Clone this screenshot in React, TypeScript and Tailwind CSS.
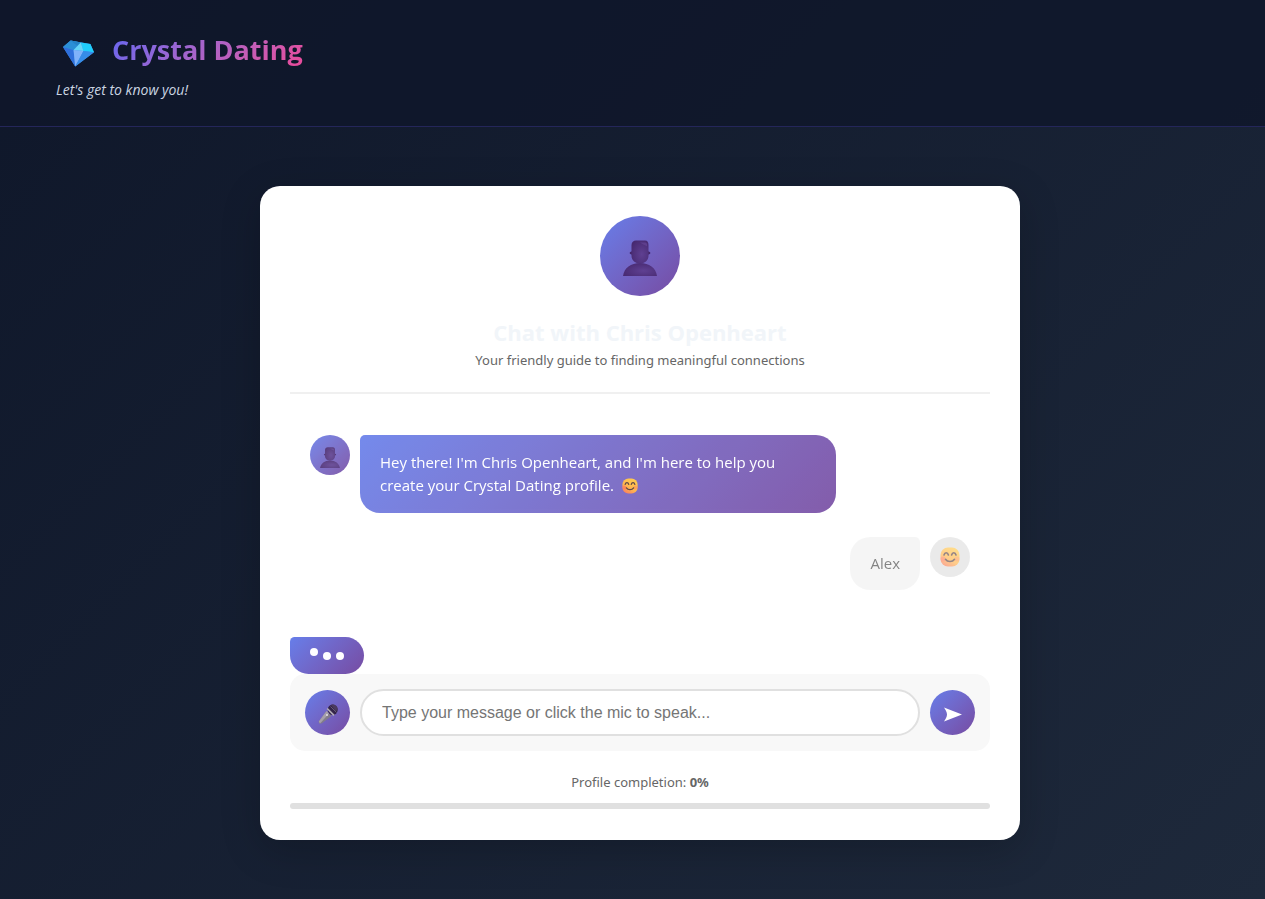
import { useId, useState } from "react";

const accent = "bg-linear-135 from-[#667eea] to-[#764ba2]";

function Gem() {
  return (
    <svg viewBox="64 58 100 87" className="h-[29px] w-[33px]" aria-hidden="true">
      <path d="M67 82 90 62 150 73 161 98 104 141Z" fill="#3d8fe8" />
      <path d="M67 82 90 62 121 68 101 92Z" fill="#2b8fd6" />
      <path d="M90 62 121 68 110 78Z" fill="#2484c8" />
      <path d="M121 68 150 73 161 98 129 94Z" fill="#20cdfb" />
      <path d="M121 68 129 94 99 91Z" fill="#67d5f7" />
      <path d="M67 82 99 91 104 141Z" fill="#2e6fdb" />
      <path d="M99 91 129 94 104 141Z" fill="#7fb2fa" />
      <path d="M129 94 161 98 104 141Z" fill="#368ce8" />
    </svg>
  );
}

function Silhouette({ className }: { className: string }) {
  const id = useId();
  return (
    <svg viewBox="0 0 34 36" className={className} aria-hidden="true">
      <defs>
        <radialGradient id={id} cx="0.6" cy="0.6" r="0.7">
          <stop offset="0" stopColor="#5f4092" />
          <stop offset="1" stopColor="#472970" />
        </radialGradient>
      </defs>
      <path d="M0 36C1 28 8 23 17 23s16 5 17 13Z" fill={`url(#${id})`} />
      <ellipse cx="17" cy="13" rx="10.5" ry="2.800" fill="#432569" />
      <path
        d="M8.500 5C8.500 2 10.500.5 13 .5h9C24.500.5 25.500 2.500 25.500 5v11c0 4.500-4 7.500-8.500 7.500S8.500 20.500 8.500 16Z"
        fill={`url(#${id})`}
      />
      <path d="M17 2.500h5c2 0 2.500 2 2 4-2-1.500-4-2-7-4Z" fill="#654594" opacity="0.7" />
    </svg>
  );
}

function Smile({ className }: { className: string }) {
  const id = useId();
  return (
    <svg viewBox="0 0 20 20" className={className} aria-hidden="true">
      <defs>
        <linearGradient id={id} x1="0.8" y1="0" x2="0.2" y2="1">
          <stop offset="0" stopColor="#ffc83d" />
          <stop offset="0.6" stopColor="#ffae3d" />
          <stop offset="1" stopColor="#f8704f" />
        </linearGradient>
      </defs>
      <rect x="0.5" y="0.500" width="19" height="19" rx="7.500" fill={`url(#${id})`} />
      <ellipse cx="3" cy="12" rx="2.500" ry="2.500" fill="#ff5d4d" opacity="0.5" />
      <ellipse cx="17" cy="12" rx="2.500" ry="2.500" fill="#ff7a4d" opacity="0.45" />
      <g fill="none" stroke="#4e3436" strokeWidth="1.600" strokeLinecap="round">
        <path d="M4 8c.8-3 3.600-3 4.400 0M11.600 8c.8-3 3.600-3 4.400 0M5.500 12.300c2 3 7 3 9 0" />
      </g>
    </svg>
  );
}

function Microphone() {
  return (
    <svg viewBox="0 0 20 20" className="mt-[2px] size-5" aria-hidden="true">
      <path d="M8.500 7 13.500 12 3.500 19.500 1 19.500.800 17.500Z" fill="#827c8a" />
      <path d="M8.500 7 11 9.500 2 19.500 .800 17.500Z" fill="#a6a0aa" />
      <ellipse cx="14.700" cy="5.700" rx="5" ry="5.200" fill="#33244a" />
      <path d="M13 1c3-1.500 7.500 1.500 6.500 5.500L17.500 7Z" fill="#4a3a5e" />
      <path d="M9.200 4.500 16 11.300" stroke="#b3adb8" strokeWidth="1.700" />
      <path d="M12.500 2.500 18.500 8.500" stroke="#75697f" strokeWidth=".8" />
      <circle cx="9" cy="11" r="1" fill="#e4e1e6" />
    </svg>
  );
}

function SendArrow() {
  return (
    <svg viewBox="0 0 18 15" className="mt-1 h-[15px] w-[18px]" aria-hidden="true">
      <path d="M0 .5 18 7.500 0 14.500C1.500 12 3 10 3 7.500S1.500 3 0 .5Z" fill="#fff" />
    </svg>
  );
}

export default function App() {
  const [message, setMessage] = useState("");
  return (
    <div className="min-h-screen overflow-x-hidden bg-linear-135 from-[#0f172a] to-[#1e293b] font-['Open_Sans','Noto_Sans',sans-serif]">
      <header className="border-b border-[#24265a] bg-[#0f172a]/80 px-14 pt-[30px] pb-6">
        <div className="flex h-10 items-center">
          <span className="flex w-14 pt-[6px] pl-[6px]">
            <Gem />
          </span>
          <h1 className="bg-linear-135 from-[#6366f1] to-[#ec4899] bg-clip-text text-[27px] leading-10 font-bold text-transparent">
            Crystal Dating
          </h1>
        </div>
        <p className="mt-2 text-[14px] leading-6 text-slate-300 italic">Let's get to know you!</p>
      </header>

      <main className="py-[59px] pl-[15px]">
        <section className="mx-auto max-w-[760px] rounded-[20px] bg-white px-[30px] pt-[30px] pb-[31px] shadow-[0_10px_40px_rgba(0,0,0,0.2)]">
          <div className="flex flex-col items-center border-b-2 border-[#f0f0f0] pb-5 text-center">
            <div className={`flex size-20 items-center justify-center rounded-full ${accent}`}>
              <Silhouette className="mt-1 h-9 w-[34px]" />
            </div>
            <h2 className="mt-5 text-[22px] leading-8 font-bold text-slate-100">
              Chat with Chris Openheart
            </h2>
            <p className="font-['Noto_Sans',sans-serif] text-[13px] leading-6 text-[#666666]">
              Your friendly guide to finding meaningful connections
            </p>
          </div>

          <div className="flex flex-col gap-6 px-5 pt-[41px] pb-[47px]">
            <div className="flex items-start gap-[10px] opacity-90">
              <div className={`flex size-10 shrink-0 items-center justify-center rounded-full ${accent}`}>
                <Silhouette className="mt-1 h-[21px] w-5" />
              </div>
              <div className={`max-w-[476px] rounded-[20px] rounded-tl-[5px] px-5 py-4 ${accent}`}>
                <p className="text-[15px] leading-[23px] font-medium text-white">
                  Hey there! I'm Chris Openheart, and I'm here to help you create your Crystal Dating
                  profile. <Smile className="ml-1 inline size-4 align-[-3px]" />
                </p>
              </div>
            </div>
            <div className="flex items-start justify-end gap-[10px] opacity-60">
              <p className="rounded-[20px] rounded-tr-[5px] bg-[#f0f0f0] px-5 py-[15px] text-[15px] leading-[23px] text-[#333333]">
                Alex
              </p>
              <div className="flex size-10 shrink-0 items-center justify-center rounded-full bg-[#dddddd]">
                <Smile className="size-5" />
              </div>
            </div>
          </div>

          <div
            className={`flex h-[37px] w-[74px] items-center justify-center gap-[5px] rounded-[20px] rounded-tl-[5px] ${accent}`}
            aria-label="Chris is typing"
          >
            <span className="mb-2 size-2 rounded-full bg-white" />
            <span className="size-2 rounded-full bg-white" />
            <span className="size-2 rounded-full bg-white" />
          </div>

          <form
            className="flex items-center gap-[10px] rounded-[15px] bg-[#f8f8f8] p-[15px]"
            onSubmit={(e) => e.preventDefault()}
          >
            <button
              type="button"
              aria-label="Speak"
              className={`flex size-[45px] shrink-0 items-center justify-center rounded-full ${accent}`}
            >
              <Microphone />
            </button>
            <input
              type="text"
              aria-label="Message"
              value={message}
              onChange={(e) => setMessage(e.target.value)}
              placeholder="Type your message or click the mic to speak..."
              className="h-[47px] min-w-0 flex-1 rounded-full border-2 border-[#e0e0e0] bg-white px-5 font-['Liberation_Sans',sans-serif] text-[16px] text-[#333333] outline-none placeholder:text-[#757575]"
            />
            <button
              type="submit"
              aria-label="Send"
              className={`flex size-[45px] shrink-0 items-center justify-center rounded-full ${accent}`}
            >
              <SendArrow />
            </button>
          </form>

          <p className="mt-5 text-center font-['Noto_Sans',sans-serif] text-[13px] leading-[22px] text-[#666666]">
            Profile completion: <strong>0%</strong>
          </p>
          <div
            role="progressbar"
            aria-label="Profile completion"
            aria-valuenow={0}
            className="mt-[10px] h-[6px] rounded-full bg-[#e0e0e0]"
          />
        </section>
      </main>
    </div>
  );
}
